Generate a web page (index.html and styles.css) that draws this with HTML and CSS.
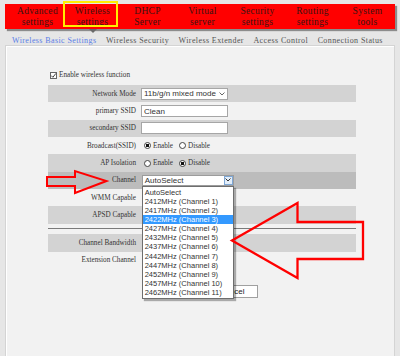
FILE: index.html
```html
<!DOCTYPE html>
<html lang="en">
<head>
    <meta charset="UTF-8">
    <meta name="viewport" content="width=device-width, initial-scale=1.0">
    <title>Wireless Basic Settings</title>
    <link rel="stylesheet" href="styles.css">
</head>
<body>
    <div class="page">
        <ul class="nav">
            <li>Advanced<br>settings</li>
            <li class="active">Wireless<br>settings</li>
            <li>DHCP<br>Server</li>
            <li>Virtual<br>server</li>
            <li>Security<br>settings</li>
            <li>Routing<br>settings</li>
            <li>System<br>tools</li>
        </ul>
        <ul class="tabs">
            <li class="active">Wireless Basic Settings</li>
            <li>Wireless Security</li>
            <li>Wireless Extender</li>
            <li>Access Control</li>
            <li>Connection Status</li>
        </ul>

        <div class="panel">
            <div class="form">
                <label class="enable">
                    <span class="check"><svg width="7" height="7" viewBox="0 0 7 7"><path d="M1.2 3.6 L2.9 5.3 L5.9 1.4" fill="none" stroke="#444" stroke-width="1"/></svg></span>
                    Enable wireless function
                </label>

                <div class="row band">
                    <span class="lbl">Network Mode</span>
                    <span class="select">11b/g/n mixed mode<svg class="chev" width="6" height="4" viewBox="0 0 6 4"><path d="M0.5 0.5 L3 3 L5.5 0.5" fill="none" stroke="#666"/></svg></span>
                </div>
                <div class="row">
                    <span class="lbl">primary SSID</span>
                    <input class="text" type="text" value="Clean">
                </div>
                <div class="row band">
                    <span class="lbl">secondary SSID</span>
                    <input class="text" type="text" value="">
                </div>
                <div class="row">
                    <span class="lbl">Broadcast(SSID)</span>
                    <span class="radio on"></span><span class="opt">Enable</span>
                    <span class="radio"></span><span class="opt">Disable</span>
                </div>
                <div class="row band">
                    <span class="lbl">AP Isolation</span>
                    <span class="radio"></span><span class="opt">Enable</span>
                    <span class="radio on"></span><span class="opt">Disable</span>
                </div>
                <div class="row dark">
                    <span class="lbl">Channel</span>
                    <div class="combo">
                        <span class="combo-val">AutoSelect</span>
                        <span class="combo-btn"><svg width="6" height="4" viewBox="0 0 6 4"><path d="M0.5 0.5 L3 3 L5.5 0.5" fill="none" stroke="#333"/></svg></span>
                        <ul class="list">
                            <li>AutoSelect</li>
                            <li>2412MHz (Channel 1)</li>
                            <li>2417MHz (Channel 2)</li>
                            <li class="picked">2422MHz (Channel 3)</li>
                            <li>2427MHz (Channel 4)</li>
                            <li>2432MHz (Channel 5)</li>
                            <li>2437MHz (Channel 6)</li>
                            <li>2442MHz (Channel 7)</li>
                            <li>2447MHz (Channel 8)</li>
                            <li>2452MHz (Channel 9)</li>
                            <li>2457MHz (Channel 10)</li>
                            <li>2462MHz (Channel 11)</li>
                        </ul>
                    </div>
                </div>
                <div class="row">
                    <span class="lbl">WMM Capable</span>
                </div>
                <div class="row band">
                    <span class="lbl">APSD Capable</span>
                </div>

                <div class="divider"></div>

                <div class="row band">
                    <span class="lbl">Channel Bandwidth</span>
                </div>
                <div class="row">
                    <span class="lbl">Extension Channel</span>
                </div>

                <div class="buttons">
                    <button class="btn">Cancel</button>
                </div>
            </div>
        </div>

        <!-- red annotation arrows -->
        <svg class="marks" width="400" height="356" viewBox="0 0 400 356">
            <polygon points="47,177 75,177 75,171 106.5,181 75,193 75,186 47,186" fill="none" stroke="#f00" stroke-width="2" stroke-linejoin="miter"/>
            <polygon points="232,240.5 297.5,203 297.5,222 363,222 363,259 297.5,259 297.5,278" fill="none" stroke="#f00" stroke-width="2.3" stroke-linejoin="miter"/>
        </svg>
    </div>
</body>
</html>
```

FILE: styles.css
```css
* {
    margin: 0;
    padding: 0;
    list-style: none;
    box-sizing: border-box;
}

body {
    background-color: #e6e6e6;
    font-family: "Liberation Serif", "Times New Roman", serif;
    color: #333;
}

.page {
    position: relative;
    width: 400px;
    height: 356px;
    padding-top: 4px;
    overflow: hidden;
}

/* top red menu */
.nav {
    display: flex;
    height: 25px;
    margin: 0 5px;
    padding-left: 5px;
    background-color: #ff0000;
    box-shadow: 2px 2px 1px #8c8c8c;
}

.nav li {
    position: relative;
    width: 55px;
    padding-top: 1.5px;
    font-size: 9.5px;
    line-height: 11px;
    letter-spacing: 0.3px;
    text-align: center;
    color: #3a1414;
}

.nav li.active::after {
    content: "";
    position: absolute;
    top: -3px;
    left: -2px;
    right: 2px;
    bottom: 2px;
    border: 2px solid #ffee00;
}

.nav li.active::before {
    content: "";
    position: absolute;
    left: 50%;
    bottom: -4px;
    margin-left: -4px;
    border-left: 4px solid transparent;
    border-right: 4px solid transparent;
    border-top: 4px solid #6a6a6a;
}

/* sub tabs */
.tabs {
    display: flex;
    gap: 9.5px;
    height: 9px;
    margin-top: 7px;
    padding-left: 12px;
    font-size: 8px;
    line-height: 10px;
    letter-spacing: 0.4px;
    white-space: nowrap;
}

.tabs li {
    color: #555;
}

.tabs li.active {
    color: #5b7ee6;
}

/* content panel */
.panel {
    height: 320px;
    margin: 0 5px;
    border: 1px solid #d4d4d4;
    background-color: #f2f2f2;
    box-shadow: inset 1px 1px 0 #fff;
}

.form {
    width: 308px;
    margin-left: 42px;
    padding-top: 23px;
    font-size: 7.2px;
}

.enable {
    display: flex;
    align-items: center;
    gap: 2px;
    height: 12px;
    margin-bottom: 4px;
    padding-left: 2px;
}

.check {
    display: flex;
    width: 7px;
    height: 7px;
    border: 1px solid #666;
    background-color: #fff;
}

.check svg {
    margin: -1px;
}

.row {
    display: flex;
    align-items: center;
    height: 17.35px;
}

.row.band {
    background-color: #d3d3d3;
}

.row.dark {
    background-color: #bcbcbc;
}

.lbl {
    width: 88px;
    margin-right: 5px;
    text-align: right;
    white-space: nowrap;
}

.select,
.text {
    display: flex;
    align-items: center;
    width: 87px;
    height: 12px;
    padding-left: 2px;
    border: 1px solid #a6a6a6;
    background-color: #fff;
    font-family: "Liberation Sans", Arial, sans-serif;
    font-size: 8px;
    color: #333;
    outline: none;
}

.select .chev {
    margin-left: auto;
    margin-right: 2px;
}

.radio {
    width: 7px;
    height: 7px;
    margin-left: 3px;
    margin-right: 2px;
    border: 1px solid #444;
    border-radius: 50%;
    background-color: #fff;
}

.radio.on {
    background: radial-gradient(circle, #111 0 1.6px, #fff 2px);
}

.opt {
    margin-right: 3px;
}

/* open channel select */
.combo {
    position: relative;
    display: flex;
    width: 92px;
    height: 11.5px;
    margin-left: 0.7px;
    border: 1px solid #9c9c9c;
    background-color: #fff;
    font-family: "Liberation Sans", Arial, sans-serif;
    font-size: 8px;
    color: #333;
}

.combo-val {
    flex: 1;
    padding-left: 2px;
    line-height: 9.5px;
}

.combo-btn {
    display: flex;
    align-items: center;
    justify-content: center;
    width: 9px;
    border: 1px solid #7fa8d6;
    background-color: #e3eefa;
}

.list {
    position: absolute;
    top: 10.5px;
    left: -0.5px;
    z-index: 5;
    width: 92px;
    padding: 0.5px 0;
    border: 1px solid #6e6e6e;
    background-color: #fff;
    box-shadow: 2px 2px 1px rgba(0, 0, 0, 0.3);
    font-size: 7.5px;
}

.list li {
    height: 9.15px;
    padding-left: 1.5px;
    line-height: 9.15px;
    white-space: nowrap;
}

.list li.picked {
    background-color: #3399ff;
    color: #fff;
}

.divider {
    height: 1px;
    margin: 4.5px 0 5px;
    background-color: #7a7a7a;
}

.buttons {
    display: flex;
    margin-top: 16px;
    padding-left: 158px;
}

.btn {
    width: 52px;
    height: 13px;
    border: 1px solid #a0a0a0;
    background-color: #fff;
    font-family: "Liberation Sans", Arial, sans-serif;
    font-size: 8px;
    color: #222;
}

/* annotation layer */
.marks {
    position: absolute;
    top: 0;
    left: 0;
    z-index: 10;
    pointer-events: none;
}
```
